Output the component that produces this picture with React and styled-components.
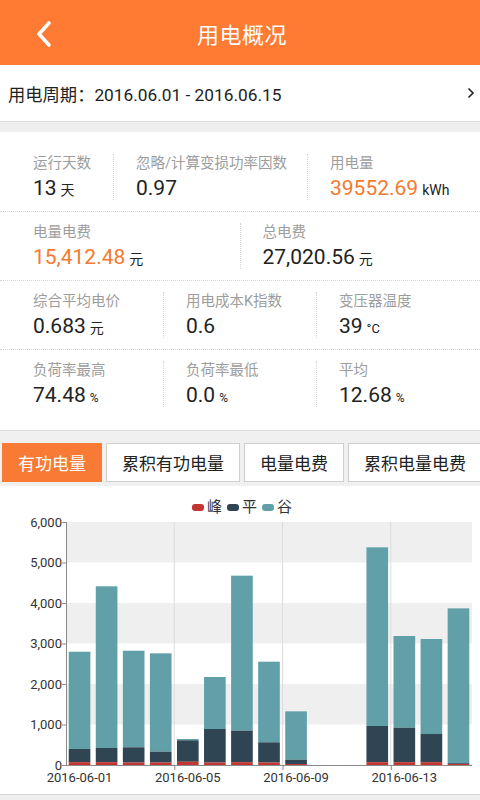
import React from "react";
import styled, { createGlobalStyle } from "styled-components";

const FONT = `Roboto, "Noto Sans CJK SC", "Noto Sans", sans-serif`;

const Global = createGlobalStyle`
  html, body { margin: 0; padding: 0; background: #efefef; }
  body { font-family: ${FONT}; -webkit-font-smoothing: antialiased; }
  * { box-sizing: border-box; }
`;

const Page = styled.div`
  width: 480px;
  min-height: 800px;
  background: #efefef;
  overflow: hidden;
`;

const Header = styled.header`
  height: 65px;
  background: #ff7a33;
  display: flex;
  align-items: center;
  justify-content: center;
  position: relative;
`;

const Title = styled.h1`
  margin: 0;
  font-size: 22px;
  font-weight: 400;
  color: #fff;
  letter-spacing: 0.5px;
  padding-left: 4px;
`;

const Back = styled.button`
  position: absolute;
  left: 30px;
  top: 18px;
  width: 28px;
  height: 32px;
  padding: 0;
  border: 0;
  background: none;
  display: flex;
  align-items: center;
  justify-content: center;
`;

const PeriodRow = styled.div`
  height: 57px;
  background: #fff;
  border-bottom: 1px solid #dcdcdc;
  margin-bottom: 10px;
  display: flex;
  align-items: center;
  justify-content: space-between;
  padding: 0 5px 0 8px;
  font-size: 17.3px;
  color: #222;
`;

const StatsCard = styled.section`
  background: #fff;
  padding: 11px 11px 12px;
  border-bottom: 1px solid #dcdcdc;
`;

const StatRow = styled.div`
  display: flex;
  padding: 11px 11px;
  margin: 0 -11px;
  border-bottom: ${(p) => (p.$last ? "none" : "1px dotted #d6d6d6")};
`;

const Cell = styled.div`
  flex: ${(p) => (p.$basis ? `0 0 ${p.$basis}px` : "1 1 0")};
  height: 46px;
  padding-left: 22px;
  border-left: ${(p) => (p.$first ? "none" : "1px dotted #d6d6d6")};
  display: flex;
  flex-direction: column;
  white-space: nowrap;
`;

const Label = styled.div`
  font-size: 14.5px;
  line-height: 20px;
  color: #9d9d9d;
`;

const Value = styled.div`
  margin-top: 2px;
  line-height: 24px;
  font-size: 21px;
  color: ${(p) => (p.$accent ? "#f47a30" : "#222")};
`;

const Unit = styled.span`
  font-size: ${(p) => p.$size || 14}px;
  color: #222;
  margin-left: 4px;
`;

const TabStrip = styled.div`
  background: #f0f0f0;
  padding: 12px 0 4px 2px;
  display: flex;
  gap: 4px;
  overflow: hidden;
`;

const Tab = styled.button`
  flex: 0 0 auto;
  height: 39px;
  padding: 0 15px;
  font-family: ${FONT};
  font-size: 17px;
  color: ${(p) => (p.$active ? "#fff" : "#222")};
  background: ${(p) => (p.$active ? "#f97a35" : "#fff")};
  border: 1px solid ${(p) => (p.$active ? "#f97a35" : "#cfcfcf")};
  border-radius: 0;
`;

const ChartCard = styled.section`
  background: #fff;
  border-bottom: 1px solid #d8d8d8;
  display: flex;
  flex-direction: column;
`;

const Legend = styled.div`
  height: 30px;
  padding-top: 12px;
  display: flex;
  justify-content: center;
  gap: 5px;
  padding-left: 4px;
`;

const LegendItem = styled.div`
  display: flex;
  align-items: center;
  gap: 3px;
  font-size: 15px;
  line-height: 18px;
  color: #333;
`;

const Swatch = styled.span`
  width: 12px;
  height: 7px;
  border-radius: 3px;
  background: ${(p) => p.$color};
`;

const ChartSvg = styled.svg`
  display: block;
`;

const RED = "#c23531";
const DARK = "#2f4554";
const TEAL = "#61a0a8";

// [peak, peak+flat, total]
const DATA = [
  [70, 395, 2797],
  [70, 420, 4412],
  [60, 437, 2822],
  [60, 329, 2757],
  [80, 610, 642],
  [60, 889, 2173],
  [70, 848, 4675],
  [60, 560, 2551],
  [25, 131, 1325],
  [0, 0, 0],
  [0, 0, 0],
  [70, 963, 5374],
  [70, 921, 3185],
  [70, 765, 3111],
  [25, 45, 3868],
];

const X0 = 66;
const X1 = 472;
const Y0 = 249; // value 0
const YTOP = 6; // value 6000
const scale = (Y0 - YTOP) / 6000;
const yOf = (v) => Y0 - v * scale;
const cw = (X1 - X0) / DATA.length;
const barW = cw * 0.8;

function Chart() {
  const ticks = [0, 1000, 2000, 3000, 4000, 5000, 6000];
  const bandEls = [];
  for (let i = 0; i < 6; i++) {
    const top = yOf((i + 1) * 1000);
    const bottom = yOf(i * 1000);
    bandEls.push(
      <rect
        key={i}
        x={X0}
        y={top}
        width={X1 - X0}
        height={bottom - top}
        fill={i % 2 === 1 ? "#efefef" : "#fff"}
      />
    );
  }
  const splitXs = [4, 8, 12].map((i) => X0 + i * cw);
  const labelIdx = [0, 4, 8, 12];
  const fmt = (n) => n.toLocaleString("en-US");
  return (
    <ChartSvg width="480" height="278" viewBox="0 0 480 278">
      {bandEls}
      {splitXs.map((x) => (
        <line key={x} x1={x} x2={x} y1={YTOP} y2={Y0} stroke="#dcdcdc" strokeWidth="1" />
      ))}
      {DATA.map(([r, d, t], i) => {
        if (!t) return null;
        const cx = X0 + (i + 0.5) * cw;
        const x = cx - barW / 2;
        return (
          <g key={i}>
            <rect x={x} y={yOf(t)} width={barW} height={yOf(d) - yOf(t)} fill={TEAL} />
            <rect x={x} y={yOf(d)} width={barW} height={yOf(r) - yOf(d)} fill={DARK} />
            <rect x={x} y={yOf(r)} width={barW} height={Y0 - yOf(r)} fill={RED} />
          </g>
        );
      })}
      <line x1={X0 + 0.5} x2={X0 + 0.5} y1={YTOP} y2={Y0} stroke="#8a8a8a" strokeWidth="1" />
      <line x1={X0} x2={X1} y1={Y0 + 0.5} y2={Y0 + 0.5} stroke="#8a8a8a" strokeWidth="1" />
      {ticks.map((v) => (
        <g key={v}>
          <line x1={X0 - 4} x2={X0} y1={yOf(v) + 0.5} y2={yOf(v) + 0.5} stroke="#8a8a8a" strokeWidth="1" />
          <text
            x={X0 - 4}
            y={yOf(v)}
            dy="0.36em"
            textAnchor="end"
            fontFamily={FONT}
            fontSize="13"
            fill="#333"
          >
            {fmt(v)}
          </text>
        </g>
      ))}
      {splitXs.map((x) => (
        <line key={"t" + x} x1={x + 0.5} x2={x + 0.5} y1={Y0} y2={Y0 + 5} stroke="#8a8a8a" strokeWidth="1" />
      ))}
      {labelIdx.map((i) => (
        <text
          key={i}
          x={X0 + (i + 0.5) * cw}
          y={Y0 + 12}
          dy="0.36em"
          textAnchor="middle"
          fontFamily={FONT}
          fontSize="13"
          fill="#333"
        >
          {`2016-06-${String(i + 1).padStart(2, "0")}`}
        </text>
      ))}
    </ChartSvg>
  );
}

export default function App() {
  return (
    <Page>
      <Global />
      <Header>
        <Back aria-label="back">
          <svg width="16" height="26" viewBox="0 0 16 26">
            <path d="M13 2 L3 13 L13 24" fill="none" stroke="#fff" strokeWidth="3.6" strokeLinecap="round" strokeLinejoin="round" />
          </svg>
        </Back>
        <Title>用电概况</Title>
      </Header>

      <PeriodRow>
        <span>用电周期：2016.06.01 - 2016.06.15</span>
        <svg width="8" height="12" viewBox="0 0 8 12">
          <path d="M1.5 1.5 L6 6 L1.5 10.5" fill="none" stroke="#222" strokeWidth="1.6" />
        </svg>
      </PeriodRow>

      <StatsCard>
        <StatRow>
          <Cell $first $basis={102}>
            <Label>运行天数</Label>
            <Value>13<Unit>天</Unit></Value>
          </Cell>
          <Cell $basis={194}>
            <Label>忽略/计算变损功率因数</Label>
            <Value>0.97</Value>
          </Cell>
          <Cell>
            <Label>用电量</Label>
            <Value $accent>39552.69<Unit>kWh</Unit></Value>
          </Cell>
        </StatRow>
        <StatRow>
          <Cell $first>
            <Label>电量电费</Label>
            <Value $accent>15,412.48<Unit>元</Unit></Value>
          </Cell>
          <Cell>
            <Label>总电费</Label>
            <Value>27,020.56<Unit>元</Unit></Value>
          </Cell>
        </StatRow>
        <StatRow>
          <Cell $first>
            <Label>综合平均电价</Label>
            <Value>0.683<Unit>元</Unit></Value>
          </Cell>
          <Cell>
            <Label>用电成本K指数</Label>
            <Value>0.6</Value>
          </Cell>
          <Cell>
            <Label>变压器温度</Label>
            <Value>39<Unit $size={13}>°C</Unit></Value>
          </Cell>
        </StatRow>
        <StatRow $last>
          <Cell $first>
            <Label>负荷率最高</Label>
            <Value>74.48<Unit $size={12}>%</Unit></Value>
          </Cell>
          <Cell>
            <Label>负荷率最低</Label>
            <Value>0.0<Unit $size={12}>%</Unit></Value>
          </Cell>
          <Cell>
            <Label>平均</Label>
            <Value>12.68<Unit $size={12}>%</Unit></Value>
          </Cell>
        </StatRow>
      </StatsCard>

      <TabStrip>
        <Tab $active>有功电量</Tab>
        <Tab>累积有功电量</Tab>
        <Tab>电量电费</Tab>
        <Tab>累积电量电费</Tab>
      </TabStrip>

      <ChartCard>
        <Legend>
          <LegendItem><Swatch $color={RED} />峰</LegendItem>
          <LegendItem><Swatch $color={DARK} />平</LegendItem>
          <LegendItem><Swatch $color={TEAL} />谷</LegendItem>
        </Legend>
        <Chart />
      </ChartCard>
    </Page>
  );
}
